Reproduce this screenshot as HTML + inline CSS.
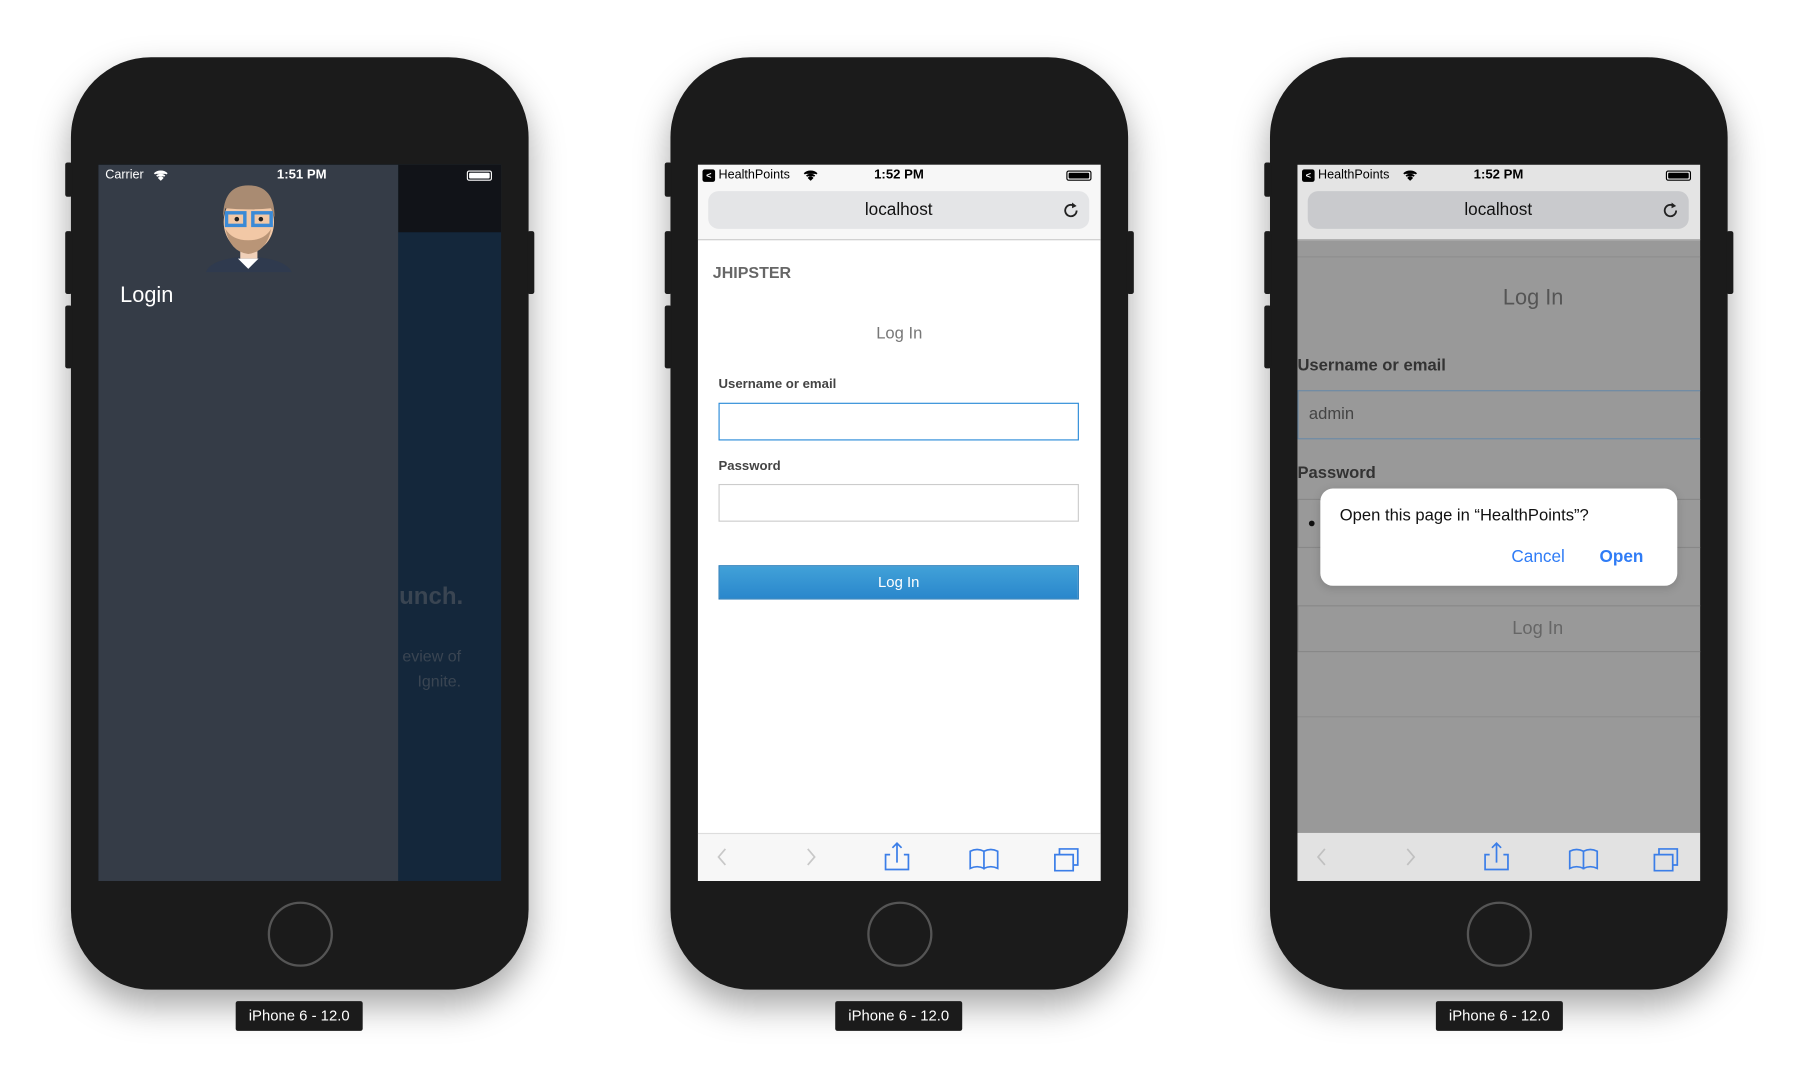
<!DOCTYPE html>
<html><head><meta charset="utf-8"><style>
*{margin:0;padding:0;box-sizing:border-box}
html,body{width:1794px;height:1090px;overflow:hidden;background:#fff;font-family:"Liberation Sans",sans-serif}
#w{position:absolute;left:0;top:0;width:1568px;height:953px;transform:scale(1.14413);transform-origin:0 0}
.ph{position:absolute;top:50px;width:400px;height:815px;background:#1b1b1b;border-radius:70px;box-shadow:0 14px 30px rgba(0,0,0,.35)}
.btn{position:absolute;background:#1b1b1b;width:6px;border-radius:2px}
.home{position:absolute;left:172px;top:738px;width:57px;height:57px;border-radius:50%;border:2.5px solid #555}
.lbl{position:absolute;top:875px;width:111px;height:26px;background:#1b1b1b;color:#fff;font-size:13px;text-align:center;line-height:26px;border-radius:2px}
.scr{position:absolute;left:24px;top:94px;width:352px;height:626px;overflow:hidden}
.abs{position:absolute}
.sb{position:absolute;left:0;top:0;width:352px;height:20px;font-size:11.5px;font-weight:bold}
.bat{position:absolute;top:5px;left:322px;width:22px;height:9px;border:1px solid currentColor;border-radius:2px;padding:1px}
.bat i{display:block;width:100%;height:100%;background:currentColor;border-radius:1px}
</style></head><body><div id="w">

<!-- Phone 1 -->
<div class="ph" style="left:62px">
 <div class="btn" style="left:-5px;top:92px;height:30px"></div>
 <div class="btn" style="left:-5px;top:152px;height:55px"></div>
 <div class="btn" style="left:-5px;top:217px;height:55px"></div>
 <div class="btn" style="left:399px;top:152px;height:55px"></div>
 <div class="home"></div>
 <div class="scr" style="background:#14273b">
  <div class="abs" style="left:262px;top:0;width:90px;height:59px;background:#111318"></div>
  <div class="abs" style="left:250px;top:366px;font-size:21px;font-weight:bold;color:#3a4552">hunch.</div>
  <div class="abs" style="left:250px;top:418px;font-size:14px;color:#3a4552;line-height:22px;text-align:right;width:67px">eview of<br>Ignite.</div>
  <div class="abs" style="left:0;top:0;width:262px;height:626px;background:#353c47"></div>
  <div class="sb" style="color:#fff">
   <span class="abs" style="left:6px;top:3px;font-weight:normal;font-size:11px">Carrier</span>
   <svg class="abs" style="left:48px;top:4px" width="13" height="10" viewBox="0 0 13 10"><path d="M1 4a8 8 0 0 1 11 0M3 6a5 5 0 0 1 7 0M6.5 9l-1.5-1.5a2 2 0 0 1 3 0z" stroke="#fff" stroke-width="1.5" fill="#fff"/></svg>
   <span class="abs" style="left:156px;top:3px">1:51 PM</span>
   <div class="bat" style="color:#fff"><i></i></div>
  </div>
  <svg class="abs" style="left:94px;top:16px" width="75" height="78" viewBox="0 0 75 78">
   <path d="M0 78q4-12 37-14 33 2 38 14z" fill="#2f3a4e"/>
   <rect x="30" y="52" width="15" height="14" fill="#f0d0b8"/>
   <path d="M28 66l9 9 9-9z" fill="#fff"/>
   <ellipse cx="37.5" cy="34" rx="22" ry="26" fill="#f2c8a6"/>
   <path d="M15 30q0-28 22-28 23 0 23 28l-3-8q-20 2-40 0z" fill="#a98b72"/>
   <path d="M17 40q4 20 20 22 16-2 20-22-6 10-20 10-14 0-20-10z" fill="#b99577"/>
   <rect x="18" y="26" width="16" height="11" fill="none" stroke="#3b8ad6" stroke-width="3"/>
   <rect x="41" y="26" width="16" height="11" fill="none" stroke="#3b8ad6" stroke-width="3"/>
   <circle cx="27" cy="31.5" r="2" fill="#222"/><circle cx="48" cy="31.5" r="2" fill="#222"/>
  </svg>
  <div class="abs" style="left:19px;top:104px;font-size:19px;color:#fff">Login</div>
 </div>
 <div></div>
</div>
<div class="lbl" style="left:206px">iPhone 6 - 12.0</div>

<!-- Phone 2 -->
<div class="ph" style="left:586px">
 <div class="btn" style="left:-5px;top:92px;height:30px"></div>
 <div class="btn" style="left:-5px;top:152px;height:55px"></div>
 <div class="btn" style="left:-5px;top:217px;height:55px"></div>
 <div class="btn" style="left:399px;top:152px;height:55px"></div>
 <div class="home"></div>
 <div class="scr" style="background:#fff">
  <div class="abs" style="left:0;top:0;width:352px;height:66px;background:#f7f7f7;border-bottom:1px solid #ccc"></div>
  <div class="sb" style="color:#000">
   <span class="abs" style="left:4px;top:4px;width:11px;height:11px;background:#000;border-radius:2px;color:#fff;font-size:8px;line-height:11px;text-align:center">&lt;</span>
   <span class="abs" style="left:18px;top:3px;font-weight:normal;font-size:11px">HealthPoints</span>
   <svg class="abs" style="left:92px;top:4px" width="13" height="10" viewBox="0 0 13 10"><path d="M1 4a8 8 0 0 1 11 0M3 6a5 5 0 0 1 7 0M6.5 9l-1.5-1.5a2 2 0 0 1 3 0z" stroke="#000" stroke-width="1.5" fill="#000"/></svg>
   <span class="abs" style="left:154px;top:3px">1:52 PM</span>
   <div class="bat" style="color:#000"><i></i></div>
  </div>
  <div class="abs" style="left:9px;top:23px;width:333px;height:33px;background:#e4e5e7;border-radius:9px;text-align:center;line-height:33px;font-size:15px;color:#111">localhost</div>
  <svg class="abs" style="left:318px;top:32px" width="16" height="16" viewBox="0 0 16 16"><path d="M13 8a5 5 0 1 1-2-4" fill="none" stroke="#222" stroke-width="1.6"/><path d="M9 1l4 3-4 2z" fill="#222"/></svg>
  <div class="abs" style="left:13px;top:86px;font-size:14px;font-weight:bold;color:#666">JHIPSTER</div>
  <div class="abs" style="left:0;width:352px;top:140px;text-align:center;font-size:14.5px;color:#777">Log In</div>
  <div class="abs" style="left:18px;top:186px;font-size:11.5px;font-weight:bold;color:#444">Username or email</div>
  <div class="abs" style="left:18px;top:208px;width:315px;height:33px;border:1px solid #2a8bd8"></div>
  <div class="abs" style="left:18px;top:258px;font-size:11.5px;font-weight:bold;color:#444">Password</div>
  <div class="abs" style="left:18px;top:279px;width:315px;height:33px;border:1px solid #ccc"></div>
  <div class="abs" style="left:18px;top:350px;width:315px;height:30px;background:linear-gradient(#41a1d8,#2a87cc);border:1px solid #2379b8;color:#fff;text-align:center;line-height:28px;font-size:13px">Log In</div>
  <div class="abs" style="left:0;top:584px;width:352px;height:42px;background:#f7f7f7;border-top:1px solid #ddd"></div>
  <svg class="abs" style="left:0;top:584px" width="352" height="42" viewBox="0 0 352 42">
   <g fill="none" stroke-width="1.5"><path d="M24 14l-6 7 6 7M96 14l6 7-6 7" stroke="#c8c8c8"/>
   <g stroke="#3b7ee8"><path d="M168 19h-4v13h20v-13h-4M174 26v-17M170 13l4-4 4 4"/>
   <path d="M238 16q6-3 12 0v15q-6-3-12 0zM250 16q6-3 12 0v15q-6-3-12 0z"/>
   <path d="M312 19h16v14h-16zM316 19v-5h16v14h-4"/></g></g>
  </svg>
 </div>
</div>
<div class="lbl" style="left:730px">iPhone 6 - 12.0</div>

<!-- Phone 3 -->
<div class="ph" style="left:1110px">
 <div class="btn" style="left:-5px;top:92px;height:30px"></div>
 <div class="btn" style="left:-5px;top:152px;height:55px"></div>
 <div class="btn" style="left:-5px;top:217px;height:55px"></div>
 <div class="btn" style="left:399px;top:152px;height:55px"></div>
 <div class="home"></div>
 <div class="scr" style="background:#999">
  <div class="abs" style="left:0;top:0;width:352px;height:66px;background:#e4e4e4;border-bottom:1px solid #aaa"></div>
  <div class="sb" style="color:#000">
   <span class="abs" style="left:4px;top:4px;width:11px;height:11px;background:#000;border-radius:2px;color:#fff;font-size:8px;line-height:11px;text-align:center">&lt;</span>
   <span class="abs" style="left:18px;top:3px;font-weight:normal;font-size:11px">HealthPoints</span>
   <svg class="abs" style="left:92px;top:4px" width="13" height="10" viewBox="0 0 13 10"><path d="M1 4a8 8 0 0 1 11 0M3 6a5 5 0 0 1 7 0M6.5 9l-1.5-1.5a2 2 0 0 1 3 0z" stroke="#000" stroke-width="1.5" fill="#000"/></svg>
   <span class="abs" style="left:154px;top:3px">1:52 PM</span>
   <div class="bat" style="color:#000"><i></i></div>
  </div>
  <div class="abs" style="left:9px;top:23px;width:333px;height:33px;background:#c9cacd;border-radius:9px;text-align:center;line-height:33px;font-size:15px;color:#111">localhost</div>
  <svg class="abs" style="left:318px;top:32px" width="16" height="16" viewBox="0 0 16 16"><path d="M13 8a5 5 0 1 1-2-4" fill="none" stroke="#222" stroke-width="1.6"/><path d="M9 1l4 3-4 2z" fill="#222"/></svg>
  <div class="abs" style="left:0;top:80px;width:352px;border-top:1px solid #8e8e8e"></div>
  <div class="abs" style="left:60px;width:292px;top:106px;text-align:center;font-size:19px;color:#555">Log In</div>
  <div class="abs" style="left:0;top:168px;font-size:14.5px;font-weight:bold;color:#333">Username or email</div>
  <div class="abs" style="left:0;top:197px;width:360px;height:43px;border:1px solid #6b8aa6;font-size:14.5px;color:#444;line-height:41px;padding-left:9px">admin</div>
  <div class="abs" style="left:0;top:262px;font-size:14.5px;font-weight:bold;color:#333">Password</div>
  <div class="abs" style="left:0;top:292px;width:360px;height:43px;border:1px solid #888"></div>
  <div class="abs" style="left:10px;top:311px;width:5px;height:5px;border-radius:50%;background:#111"></div>
  <div class="abs" style="left:0;top:385px;width:360px;height:41px;border:1px solid #888;text-align:center;line-height:39px;font-size:16px;color:#666;padding-left:60px">Log In</div>
  <div class="abs" style="left:0;top:482px;width:352px;border-top:1px solid #8e8e8e"></div>
  <div class="abs" style="left:20px;top:283px;width:312px;height:85px;background:#fff;border-radius:11px;box-shadow:0 2px 8px rgba(0,0,0,.15)">
   <div class="abs" style="left:17px;top:16px;font-size:14.5px;color:#111">Open this page in “HealthPoints”?</div>
   <div class="abs" style="left:167px;top:51px;font-size:15px;color:#2f7cf6">Cancel</div>
   <div class="abs" style="left:244px;top:51px;font-size:15px;color:#2f7cf6;font-weight:bold">Open</div>
  </div>
  <div class="abs" style="left:0;top:584px;width:352px;height:42px;background:#e2e2e2"></div>
  <svg class="abs" style="left:0;top:584px" width="352" height="42" viewBox="0 0 352 42">
   <g fill="none" stroke-width="1.5"><path d="M24 14l-6 7 6 7M96 14l6 7-6 7" stroke="#c0c0c0"/>
   <g stroke="#3b7ee8"><path d="M168 19h-4v13h20v-13h-4M174 26v-17M170 13l4-4 4 4"/>
   <path d="M238 16q6-3 12 0v15q-6-3-12 0zM250 16q6-3 12 0v15q-6-3-12 0z"/>
   <path d="M312 19h16v14h-16zM316 19v-5h16v14h-4"/></g></g>
  </svg>
 </div>
</div>
<div class="lbl" style="left:1255px">iPhone 6 - 12.0</div>

</div></body></html>
